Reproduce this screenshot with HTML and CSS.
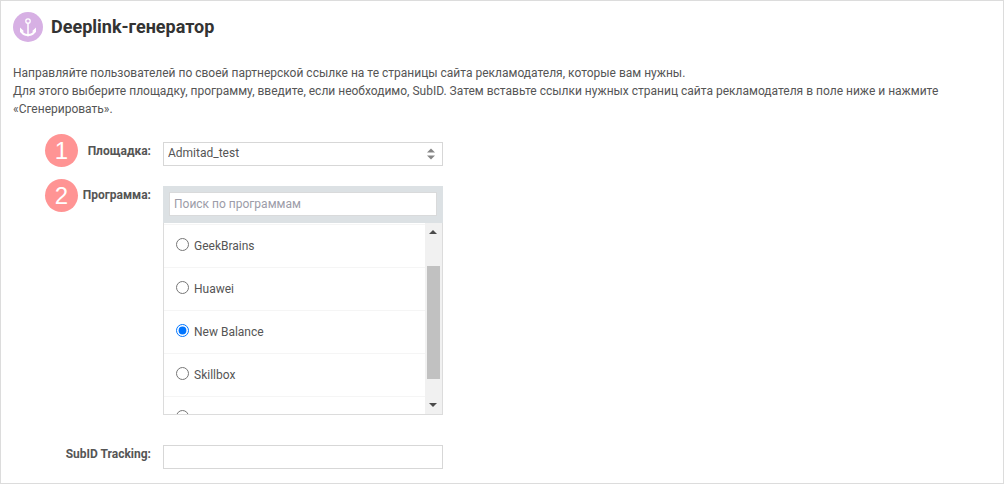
FILE: index.html
```html
<!DOCTYPE html>
<html lang="ru">
<head>
<meta charset="utf-8">
<title>Deeplink-генератор</title>
<link rel="stylesheet" href="styles.css">
</head>
<body>
<main class="panel">
  <header class="header">
    <svg class="logo" viewBox="0 0 30 30" aria-hidden="true">
      <circle cx="15" cy="15" r="15" fill="#d7b0e4"/>
      <g fill="none" stroke="#fff">
        <circle cx="15" cy="9" r="2.200" stroke-width="1.300"/>
        <path d="M15 11v12" stroke-width="1.500"/>
        <path d="M8 18.400c.9 3 3.200 4.700 7 4.700s6.100-1.700 7-4.700" stroke-width="2"/>
      </g>
      <path d="M7 15.400l4 3.800-4 1.200zM23 15.400l-4 3.800 4 1.200zM12.500 22.500h5L15 24.800z" fill="#fff"/>
    </svg>
    <h1 class="title">Deeplink-генератор</h1>
  </header>
  <p class="intro">Направляйте пользователей по своей партнерской ссылке на те страницы сайта рекламодателя, которые вам нужны.<br>Для этого выберите площадку, программу, введите, если необходимо, SubID. Затем вставьте ссылки нужных страниц сайта рекламодателя в поле ниже и нажмите «Сгенерировать».</p>
  <form class="form">
    <div class="row">
      <span class="badge">1</span>
      <label class="label" for="site">Площадка:</label>
      <div class="select-box">
        <select class="field select" id="site"><option>Admitad_test</option></select>
        <svg class="sort" viewBox="0 0 8 12" aria-hidden="true"><path d="M0 4.500L4 .5l4 4zM0 7.500h8l-4 4z" fill="#858585"/></svg>
      </div>
    </div>
    <div class="row row-programs">
      <span class="badge">2</span>
      <label class="label" for="search">Программа:</label>
      <div class="programs">
        <div class="search"><input class="search-input" id="search" type="text" placeholder="Поиск по программам"></div>
        <div class="list">
          <div class="items">
            <label class="item"><input class="radio" type="radio" name="program">GeekBrains</label>
            <label class="item"><input class="radio" type="radio" name="program">Huawei</label>
            <label class="item"><input class="radio" type="radio" name="program" checked>New Balance</label>
            <label class="item"><input class="radio" type="radio" name="program">Skillbox</label>
            <label class="item"><input class="radio" type="radio" name="program" aria-label="Следующая программа"></label>
          </div>
          <div class="scrollbar" aria-hidden="true">
            <svg class="arrow" viewBox="0 0 17 17"><path d="M4 11h8L8 7z" fill="#4a4a4a"/></svg>
            <div class="thumb"></div>
            <svg class="arrow" viewBox="0 0 17 17"><path d="M4 6h8l-4 4z" fill="#4a4a4a"/></svg>
          </div>
        </div>
      </div>
    </div>
    <div class="row">
      <label class="label" for="subid">SubID Tracking:</label>
      <input class="field" id="subid" type="text">
    </div>
  </form>
</main>
</body>
</html>
```
FILE: styles.css
```css
* { box-sizing: border-box; }
body {
  margin: 0;
  background: #fff;
  color: #555;
  font: 12px/18px Roboto, "Liberation Sans", sans-serif;
}
.panel {
  margin-right: 1px;
  padding: 11px 12px 14px;
  border: 1px solid #dcdcdc;
}
.header { display: flex; align-items: center; gap: 8px; }
.logo { width: 30px; height: 30px; flex: none; }
.title { margin: 0; color: #333; font-size: 18px; line-height: 30px; font-weight: 700; }
.intro { margin: 22px 0 24px; }
.form { display: flex; flex-direction: column; gap: 20px; }
.row {
  position: relative;
  display: grid;
  grid-template-columns: 138px minmax(0, 280px);
  column-gap: 12px;
  align-items: start;
}
.row-programs { margin-bottom: 10px; }
.label { text-align: right; font-weight: 700; color: #555; }
.badge {
  position: absolute;
  left: 32px;
  top: -8px;
  width: 33px;
  height: 33px;
  border-radius: 50%;
  background: #ff9494;
  color: #fff;
  font: 24px/33px "Liberation Sans", sans-serif;
  text-align: center;
}
.row-programs .badge { top: -7px; }
.select-box { position: relative; }
.field {
  display: block;
  width: 100%;
  height: 24px;
  margin: 0;
  padding: 0 4px;
  border: 1px solid #d7d7d7;
  border-radius: 0;
  background: #fff;
  color: #555;
  font: inherit;
}
.select { appearance: none; padding-bottom: 2px; }
.sort { position: absolute; right: 8px; top: 6px; width: 8px; height: 12px; pointer-events: none; }
.search { padding: 6px 6px 7px; background: #dce1e4; }
.search-input {
  display: block;
  width: 100%;
  height: 24px;
  padding: 0 4px;
  border: 1px solid #d9dadb;
  background: #fff;
  color: #555;
  font: inherit;
}
.search-input::placeholder { color: #9c9ca8; opacity: 1; }
.list {
  display: flex;
  height: 192px;
  overflow: hidden;
  border: 1px solid #dcdcdc;
  border-top: 0;
}
.items { flex: 1; overflow: hidden; padding-top: 1px; }
.item {
  display: flex;
  align-items: center;
  height: 43px;
  border-top: 1px solid #f5f5f5;
  padding-left: 12px;
}
.radio { width: 13px; height: 13px; margin: 0 5px 4px 0; accent-color: #0075ff; }
.scrollbar { display: flex; flex-direction: column; align-items: center; width: 17px; background: #f1f1f1; }
.arrow { width: 17px; height: 17px; flex: none; }
.thumb { width: 13px; height: 113px; margin: 26px 0 auto; background: #c1c1c1; }
```
